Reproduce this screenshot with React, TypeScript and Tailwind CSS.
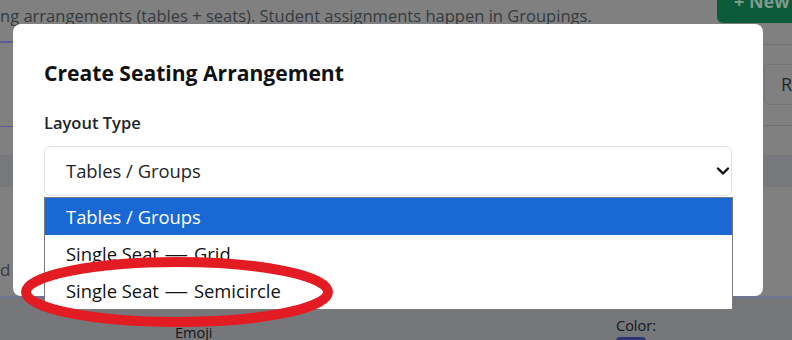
import React from "react";

const options: [string, string][] = [
  ["Tables / Groups", ""],
  ["Single Seat", "Grid"],
  ["Single Seat", "Semicircle"],
];

function Label({ a, b }: { a: string; b: string }) {
  if (!b) return <span>{a}</span>;
  return (
    <span>
      {a} <span className="mx-[3.5px] inline-block scale-x-[1.28]">—</span> {b}
    </span>
  );
}

export default function App() {
  return (
    <div className="relative h-[340px] w-[792px] overflow-hidden bg-[#808080] font-['Open_Sans',sans-serif]">
      {/* dimmed page behind the dialog */}
      <div className="flex flex-col">
        <div className="flex h-[30px] items-start justify-between">
          <p className="mt-[5px] whitespace-nowrap text-[16.55px] leading-[21px] text-[#363a3e]">
            ng arrangements (tables + seats). Student assignments happen in Groupings.
          </p>
          <div className="-mt-[20px] flex h-[43px] w-[75px] items-center rounded-bl-[6px] bg-[#0b5b38] pl-[17px] text-[18px] font-bold text-[#7f9a8c]">
            + New
          </div>
        </div>
        <div className="h-[11px]" />
        <div className="flex h-[4px]">
          <div className="flex-1 border-t-2 border-[#5a5c9c]" />
          <div className="w-[29px] border-b border-[#707274]" />
        </div>
        <div className="flex h-[80px] items-start justify-end">
          <div className="-mr-[32px] mt-[19px] flex h-[41px] w-[60px] items-center rounded-[6px] border border-[#707274] pl-[16px] text-[18px] text-[#23262a]">
            Re
          </div>
        </div>
        <div className="flex h-[2px]">
          <div className="flex-1 border-b border-[#5a5c9c]" />
          <div className="w-[29px] border-t border-[#707274]" />
        </div>
        <div className="h-[28px]" />
        <div className="h-[32px] bg-[#77787b]" />
        <div className="flex h-[109px] items-start">
          <span className="mt-[72px] whitespace-nowrap text-[17px] leading-[22px] text-[#3a3c40]">d t</span>
        </div>
        <div className="h-[2px] bg-[#707492]" />
        <div className="flex h-[43px] bg-[#76777b]">
          <div className="w-[175px]" />
          <div className="w-[441px] pt-[25px] text-[14.5px] leading-[20px] text-[#141517]">Emoji</div>
          <div className="flex flex-col">
            <span className="pt-[18px] text-[14.5px] leading-[20px] text-[#141517]">Color:</span>
            <div className="mt-[1px] h-[12px] w-[30px] rounded-t-[8px] bg-[#2e3478]" />
          </div>
        </div>
      </div>

      {/* dialog */}
      <div className="absolute left-[13px] top-[24px] h-[272px] w-[750px] rounded-[8px] bg-white px-[31px] pt-[35px]">
        <h2 className="text-[21.1px] font-bold leading-[28px] text-[#111111]">Create Seating Arrangement</h2>
        <label className="mt-[24px] block text-[16.5px] font-semibold leading-[24px] text-[#212529]">Layout Type</label>
        <div className="relative mt-[11px]">
          <div className="flex h-[50px] items-center justify-between rounded-[6px] border border-[#dee2e6] pl-[21px] pr-[1px] text-[18.4px] text-[#212529]">
            <span>Tables / Groups</span>
            <svg width="14" height="10" viewBox="0 0 14 10">
              <path d="M2 2.5 L7 7.5 L12 2.5" fill="none" stroke="#111" strokeWidth="2.4" strokeLinecap="round" strokeLinejoin="round" />
            </svg>
          </div>
          <div className="absolute left-0 top-[51px] w-[689px] border border-[#7a7a7a] bg-white">
            {options.map(([a, b], i) => (
              <div
                key={a + b}
                className={
                  i === 0
                    ? "flex h-[37px] items-center bg-[#1a68d4] pl-[21px] text-[18.4px] text-white"
                    : "flex h-[37px] items-center pl-[21px] text-[18.4px] text-[#111111]"
                }
              >
                <Label a={a} b={b} />
              </div>
            ))}
          </div>
        </div>
      </div>

      {/* red annotation */}
      <svg className="pointer-events-none absolute left-0 top-0" width="792" height="340" viewBox="0 0 792 340">
        <ellipse cx="177" cy="292" rx="151" ry="30" fill="none" stroke="#e31c23" strokeWidth="10" />
      </svg>
    </div>
  );
}
